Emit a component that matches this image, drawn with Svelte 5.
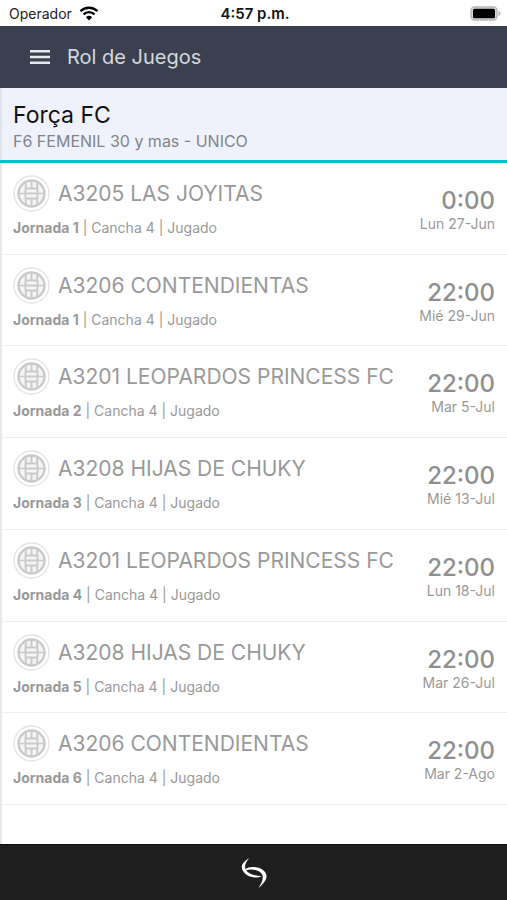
<script>
    // Equipo seleccionado
    let team = "Força FC";
    let category = "F6 FEMENIL 30 y mas - UNICO";

    // Lista de juegos
    let games = [
        { rival: "A3205 LAS JOYITAS", round: 1, field: "Cancha 4", status: "Jugado", time: "0:00", date: "Lun 27-Jun" },
        { rival: "A3206 CONTENDIENTAS", round: 1, field: "Cancha 4", status: "Jugado", time: "22:00", date: "Mié 29-Jun" },
        { rival: "A3201 LEOPARDOS PRINCESS FC", round: 2, field: "Cancha 4", status: "Jugado", time: "22:00", date: "Mar 5-Jul" },
        { rival: "A3208 HIJAS DE CHUKY", round: 3, field: "Cancha 4", status: "Jugado", time: "22:00", date: "Mié 13-Jul" },
        { rival: "A3201 LEOPARDOS PRINCESS FC", round: 4, field: "Cancha 4", status: "Jugado", time: "22:00", date: "Lun 18-Jul" },
        { rival: "A3208 HIJAS DE CHUKY", round: 5, field: "Cancha 4", status: "Jugado", time: "22:00", date: "Mar 26-Jul" },
        { rival: "A3206 CONTENDIENTAS", round: 6, field: "Cancha 4", status: "Jugado", time: "22:00", date: "Mar 2-Ago" }
    ];
</script>

<div class="app">
    <div class="status-bar">
        <div class="carrier">
            <span>Operador</span>
            <svg width="20" height="15" viewBox="0 0 20 15" aria-hidden="true">
                <path d="M1.5 5.2a12.2 12.2 0 0 1 17 0" fill="none" stroke="#000" stroke-width="2.4" />
                <path d="M4.5 8.4a7.8 7.8 0 0 1 11 0" fill="none" stroke="#000" stroke-width="2.3" />
                <path d="M10 14.5 6.9 11.2a4.5 4.5 0 0 1 6.2 0z" fill="#000" />
            </svg>
        </div>
        <div class="clock">4:57 p.m.</div>
        <svg class="battery" width="32" height="15" viewBox="0 0 32 15" aria-hidden="true">
            <rect x="2" y="1" width="26" height="13" rx="3.5" fill="#d8d8d8" stroke="#b8b8b8" stroke-width="1.4" />
            <rect x="4" y="2.8" width="22" height="9.4" rx="1.5" fill="#000" />
            <path d="M29.5 5v5q2-.8 2-2.5t-2-2.5z" fill="#b4b4b4" />
        </svg>
    </div>

    <header class="toolbar">
        <button class="menu-button" aria-label="Menú">
            <svg width="20" height="14" viewBox="0 0 20 14" aria-hidden="true">
                <path d="M0 1.2h20M0 7h20M0 12.8h20" stroke="#e6e9ee" stroke-width="2.4" />
            </svg>
        </button>
        <h1 class="title">Rol de Juegos</h1>
    </header>

    <section class="team">
        <h2 class="team-name">{team}</h2>
        <div class="team-category">{category}</div>
    </section>

    <ul class="games">
        {#each games as game}
            <li class="game">
                <div class="info">
                    <div class="rival">
                        <svg width="37" height="37" viewBox="0 0 37 37" aria-hidden="true">
                            <circle cx="18.5" cy="18.5" r="17.5" fill="#fff" stroke="#e4e4e4" stroke-width="1.4" />
                            <g fill="none" stroke="#cacaca" stroke-width="2">
                                <circle cx="18.5" cy="18.5" r="13" stroke-width="2.4" fill="#f5f5f5" />
                                <path d="M13 8q-1.4 10.5 0 21M24 8q1.4 10.5 0 21" />
                                <path d="M12.5 13.5h12M12.5 18.5h12M12.5 23.5h12" />
                                <path d="M18.5 6v7.5M18.5 23.5V31" />
                                <path d="M6 18.5h6.5M24.5 18.5H31" stroke-width="1.4" />
                            </g>
                        </svg>
                        <span class="rival-name">{game.rival}</span>
                    </div>
                    <div class="details"><b>Jornada {game.round}</b> | {game.field} | {game.status}</div>
                </div>
                <div class="schedule">
                    <div class="time">{game.time}</div>
                    <div class="date">{game.date}</div>
                </div>
            </li>
        {/each}
    </ul>

    <footer class="footer">
        <svg width="28" height="30" viewBox="0 0 28 30" aria-hidden="true">
            <path d="M9.5 0C5 2.500 1.500 6 1.800 9.500 2.500 15.500 9 19.500 16 19.500q3.500 0 5.500-1.200C14 18 6.500 15 5.300 10.500 4.500 6.500 6.500 3 9.500 0z" fill="#fff" />
            <path d="M18.500 30C23 26 27 21.500 26.500 17.500 25.500 12 19.500 9 12.500 9q-4.500 0-7.500 2.200l1 1c7-1.700 15 .300 16.500 5.300 1 4.500-1.500 8.500-4 12.500z" fill="#fff" />
        </svg>
    </footer>
</div>

<style>
    :global(body) {
        background-color: #fff;
    }

    .app {
        display: flex;
        flex-direction: column;
        min-height: 100vh;
        font-family: Inter, "Liberation Sans", sans-serif;
        background-color: #fff;
    }

    .status-bar {
        display: grid;
        grid-template-columns: 1fr auto 1fr;
        align-items: center;
        height: 26px;
        padding: 0 6px 0 9px;
        font-size: 14px;
        color: #222;
    }

    .carrier {
        display: flex;
        align-items: center;
        gap: 7px;
    }

    .clock {
        font-size: 15px;
        font-weight: 600;
        color: #111;
    }

    .battery {
        justify-self: end;
    }

    .toolbar {
        display: flex;
        align-items: center;
        gap: 12px;
        height: 62px;
        padding: 0 25px;
        background-color: #3b4050;
    }

    .menu-button {
        display: flex;
        padding: 5px;
        border: none;
        background: none;
        cursor: pointer;
    }

    .title {
        margin: 0;
        font-size: 20px;
        font-weight: 400;
        color: #d5d8dd;
    }

    .team {
        padding: 13px 13px 7px;
        background-color: #eff2fb;
        border-bottom: 3px solid #10bcd0;
        box-shadow: inset 2px 0 #e2e5ee;
    }

    .team-name {
        margin: 0;
        font-size: 23px;
        line-height: 28px;
        font-weight: 400;
        color: #111;
    }

    .team-category {
        font-size: 16px;
        line-height: 24px;
        color: #81848b;
    }

    .games {
        flex: 1;
        display: grid;
        grid-auto-rows: 1fr;
        margin: 0;
        padding: 0 0 39px;
        border-left: 2px solid #e8e8e8;
        list-style: none;
    }

    .game {
        display: flex;
        justify-content: space-between;
        padding: 12px 12px 10px 11px;
        border-bottom: 1px solid #efefef;
    }

    .rival {
        display: flex;
        align-items: center;
        gap: 8px;
        color: #999;
    }

    .rival-name {
        font-size: 21px;
        font-weight: 400;
        white-space: nowrap;
    }

    .details {
        margin-top: 6px;
        font-size: 14px;
        line-height: 20px;
        color: #999;
    }

    .details b {
        font-weight: 700;
    }

    .schedule {
        padding-top: 13px;
        text-align: right;
        white-space: nowrap;
        color: #999;
    }

    .time {
        font-size: 24px;
        line-height: 26px;
        font-weight: 500;
        color: #8f8f8f;
    }

    .date {
        font-size: 14px;
        line-height: 20px;
    }

    .footer {
        display: flex;
        align-items: center;
        justify-content: center;
        height: 55px;
        background-color: #1f1f1f;
        border-top: 1px solid #111;
    }
</style>
